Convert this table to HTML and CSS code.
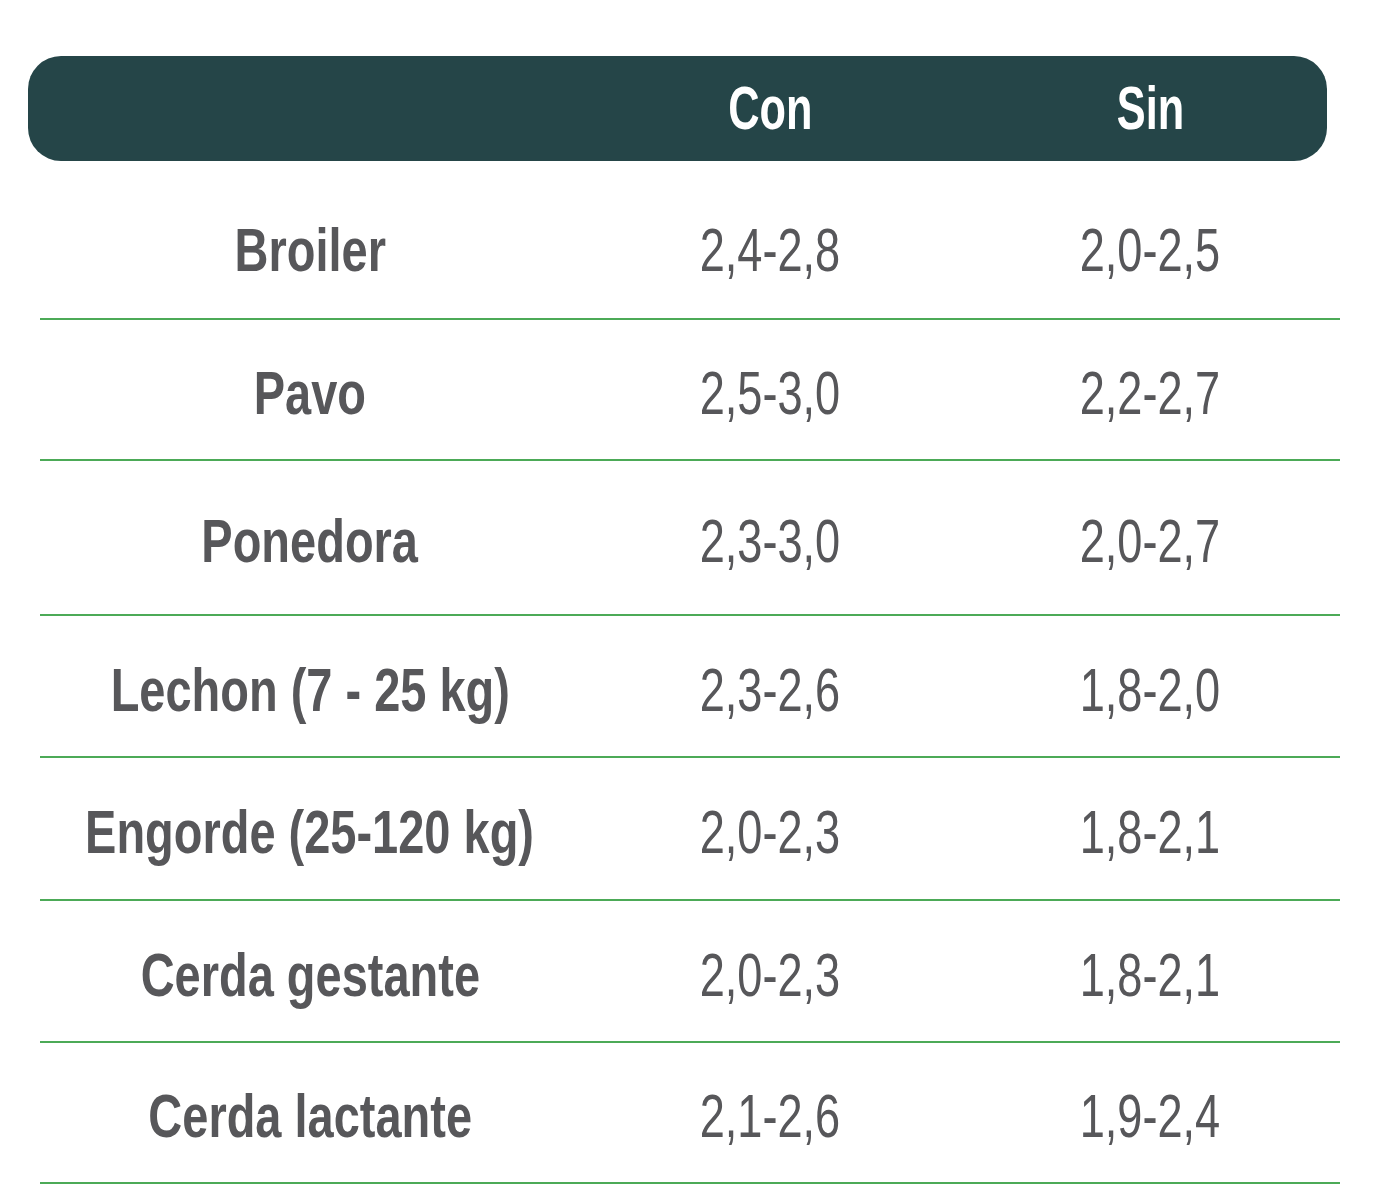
FILE: index.html
```html
<!DOCTYPE html>
<html lang="es">
<head>
<meta charset="utf-8">
<title>Tabla</title>
<link rel="stylesheet" href="styles.css">
</head>
<body>
<div class="page">
  <div class="head">
    <div class="hcell"></div>
    <div class="hcell"><span class="ht">Con</span></div>
    <div class="hcell"><span class="ht">Sin</span></div>
  </div>
  <div class="rows">
    <div class="row first">
      <div class="cell"><span class="lb">Broiler</span></div>
      <div class="cell"><span class="num">2,4-2,8</span></div>
      <div class="cell"><span class="num">2,0-2,5</span></div>
    </div>
    <div class="row h141">
      <div class="cell"><span class="lb">Pavo</span></div>
      <div class="cell"><span class="num">2,5-3,0</span></div>
      <div class="cell"><span class="num">2,2-2,7</span></div>
    </div>
    <div class="row h155">
      <div class="cell"><span class="lb">Ponedora</span></div>
      <div class="cell"><span class="num">2,3-3,0</span></div>
      <div class="cell"><span class="num">2,0-2,7</span></div>
    </div>
    <div class="row h142">
      <div class="cell"><span class="lb">Lechon (7 - 25 kg)</span></div>
      <div class="cell"><span class="num">2,3-2,6</span></div>
      <div class="cell"><span class="num">1,8-2,0</span></div>
    </div>
    <div class="row h143">
      <div class="cell"><span class="lb">Engorde (25-120 kg)</span></div>
      <div class="cell"><span class="num">2,0-2,3</span></div>
      <div class="cell"><span class="num">1,8-2,1</span></div>
    </div>
    <div class="row h142">
      <div class="cell"><span class="lb">Cerda gestante</span></div>
      <div class="cell"><span class="num">2,0-2,3</span></div>
      <div class="cell"><span class="num">1,8-2,1</span></div>
    </div>
    <div class="row h141">
      <div class="cell"><span class="lb">Cerda lactante</span></div>
      <div class="cell"><span class="num">2,1-2,6</span></div>
      <div class="cell"><span class="num">1,9-2,4</span></div>
    </div>
  </div>
</div>
</body>
</html>
```

FILE: styles.css
```css
html, body {
  margin: 0;
  padding: 0;
  background: #ffffff;
}

.page {
  padding-top: 56px;
  font-family: "Liberation Sans", Arial, sans-serif;
}

.head {
  margin-left: 28px;
  width: 1299px;
  height: 105px;
  background: #254548;
  border-radius: 33px;
  display: grid;
  grid-template-columns: 552px 380px 380px;
  align-items: center;
}

.hcell {
  display: flex;
  justify-content: center;
  line-height: 1;
}

.ht {
  display: inline-block;
  color: #ffffff;
  font-weight: 700;
  font-size: 61px;
  line-height: 1;
  transform: scaleX(0.71);
}

.rows {
  margin-left: 40px;
  width: 1300px;
}

.row {
  display: grid;
  grid-template-columns: 540px 380px 380px;
  align-items: center;
  box-sizing: border-box;
  border-bottom: 2px solid #4caa57;
  padding-top: 8px;
}

.row.first {
  height: 159px;
  padding-top: 22px;
}

.row.h141 { height: 141px; }
.row.h142 { height: 142px; }
.row.h143 { height: 143px; }
.row.h155 { height: 155px; }

.cell {
  display: flex;
  justify-content: center;
  line-height: 1;
  white-space: nowrap;
}

.lb {
  display: inline-block;
  flex: none;
  color: #57575a;
  font-weight: 700;
  font-size: 61px;
  line-height: 1;
  transform: scaleX(0.77);
}

.num {
  display: inline-block;
  flex: none;
  color: #57575a;
  font-weight: 400;
  font-size: 61px;
  line-height: 1;
  transform: scaleX(0.74);
}
```
